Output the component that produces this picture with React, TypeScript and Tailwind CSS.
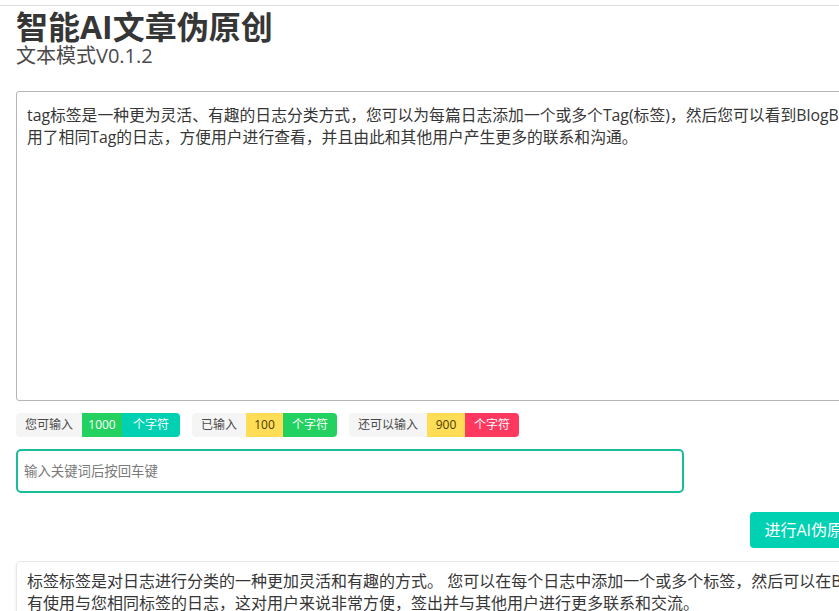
export default function App() {
  const source =
    "tag标签是一种更为灵活、有趣的日志分类方式，您可以为每篇日志添加一个或多个Tag(标签)，然后您可以看到BlogBus上所有使\n用了相同Tag的日志，方便用户进行查看，并且由此和其他用户产生更多的联系和沟通。";

  return (
    <div
      className="w-[839px] h-[611px] overflow-hidden bg-white"
      style={{ fontFamily: '"Open Sans", "Noto Sans CJK SC", sans-serif' }}
    >
      {/* top rule */}
      <div className="h-[5px]" />
      <div className="h-px w-full bg-[#dddddd]" />

      <div className="w-[940px] px-4">
        {/* header */}
        <h1 className="mt-[3px] text-[32px] font-bold leading-[36px] text-[#363636]">智能AI文章伪原创</h1>
        <h2 className="text-[20px] leading-[22px] text-[#4a4a4a]">文本模式V0.1.2</h2>

        {/* source text */}
        <textarea
          readOnly
          wrap="off"
          value={source}
          className="mt-[24px] block h-[310px] w-[857px] resize-none overflow-hidden rounded-[3px] border border-[#b5b5b5] px-[10px] py-[12px] text-[15.8px] leading-[22px] text-[#363636] outline-none"
        />

        {/* counters */}
        <div className="mt-[12px] flex gap-3 text-[12px] leading-[24px]">
          <div className="flex overflow-hidden rounded-[4px]">
            <span className="bg-[#f5f5f5] px-[9px] text-[#4a4a4a]">您可输入</span>
            <span className="w-[40px] bg-[#23d160] text-center text-white">1000</span>
            <span className="w-[58px] bg-[#00d1b2] text-center text-white">个字符</span>
          </div>
          <div className="flex overflow-hidden rounded-[4px]">
            <span className="bg-[#f5f5f5] px-[9px] text-[#4a4a4a]">已输入</span>
            <span className="w-[37px] bg-[#ffdd57] text-center text-[#4a3b00]">100</span>
            <span className="w-[54px] bg-[#23d160] text-center text-white">个字符</span>
          </div>
          <div className="flex overflow-hidden rounded-[4px]">
            <span className="bg-[#f5f5f5] px-[9px] text-[#4a4a4a]">还可以输入</span>
            <span className="w-[38px] bg-[#ffdd57] text-center text-[#4a3b00]">900</span>
            <span className="w-[54px] bg-[#ff3860] text-center text-white">个字符</span>
          </div>
        </div>

        {/* keyword input */}
        <input
          placeholder="输入关键词后按回车键"
          className="mt-[12px] block h-[44px] w-[668px] rounded-[5px] border-2 border-[#1abc9c] px-[6px] text-[13.4px] text-[#363636] outline-none placeholder:text-[#7a7a7a]"
        />

        {/* action */}
        <div className="mt-[19px] flex w-[857px] justify-end">
          <button className="h-[36px] rounded-[4px] bg-[#00d1b2] px-[14px] text-[16px] text-white">
            进行AI伪原创
          </button>
        </div>

        {/* result */}
        <div className="mt-[13px] w-[1000px] rounded-[4px] border border-[#e8e8e8] px-[10px] py-[8px] text-[16px] leading-[22px] text-[#363636] shadow-[0_2px_3px_rgba(10,10,10,0.1)]">
          <p className="whitespace-nowrap">
            标签标签是对日志进行分类的一种更加灵活和有趣的方式。 您可以在每个日志中添加一个或多个标签，然后可以在BlogBus上查看所
          </p>
          <p className="whitespace-nowrap">
            有使用与您相同标签的日志，这对用户来说非常方便，签出并与其他用户进行更多联系和交流。
          </p>
        </div>
      </div>
    </div>
  );
}
